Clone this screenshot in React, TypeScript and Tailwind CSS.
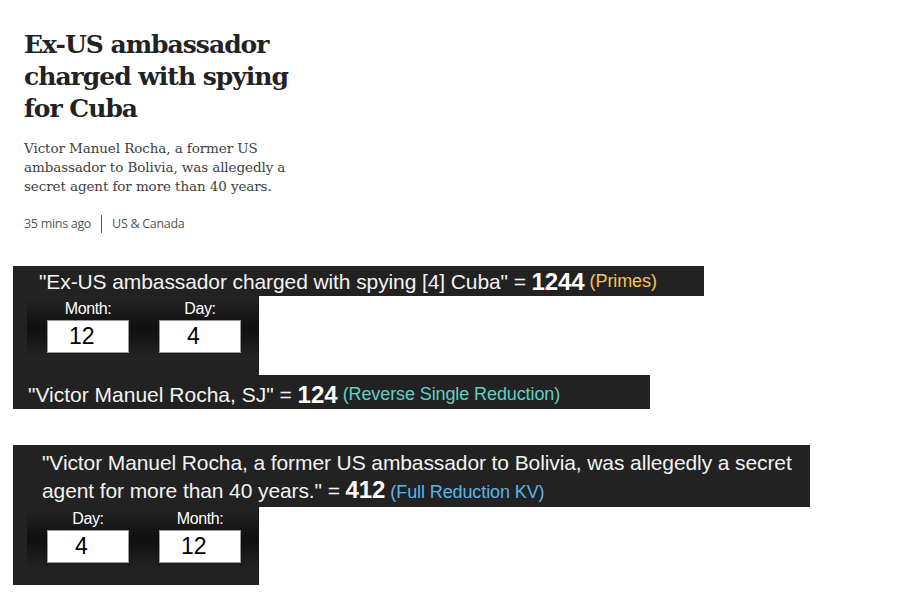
const sans = "font-['Liberation_Sans',Arial,sans-serif]";

type Field = { label: string; value: string; pad: string };

function DateField({ label, value, pad }: Field) {
    return (
        <div className="flex flex-col items-center w-[82px]">
            <span className="text-[16px] leading-[18px] text-white tracking-[-0.4px]">{label}</span>
            <div className={`mt-[2px] w-[82px] h-[33px] bg-white border border-[#9a9a9a] flex items-center text-[23px] text-black ${pad}`}>
                {value}
            </div>
        </div>
    );
}

function DatePanel({ fields, top }: { fields: Field[]; top: string }) {
    return (
        <div className={`ml-[14px] w-[232px] h-[64px] bg-[linear-gradient(to_bottom,#242424_0%,#0f0f0f_50%,#242424_100%)] flex gap-[30px] pl-[20px] ${top}`}>
            {fields.map((f) => (
                <DateField key={f.label} {...f} />
            ))}
        </div>
    );
}

export default function App() {
    return (
        <div className="w-[920px] h-[604px] bg-white overflow-hidden">
            <article className="pl-[24px] pt-[29px] w-[320px]">
                <h1 className="font-['DejaVu_Serif',serif] font-bold text-[25px] leading-[32px] text-[#202224] tracking-[-1px]">
                    Ex-US ambassador
                    <br />
                    charged with spying
                    <br />
                    for Cuba
                </h1>
                <p className="mt-[14px] font-['DejaVu_Serif',serif] text-[13.5px] leading-[19px] text-[#3f3f42] w-[280px] tracking-[-0.1px]">
                    Victor Manuel Rocha, a former US
                    <br />
                    ambassador to Bolivia, was allegedly a
                    <br />
                    secret agent for more than 40 years.
                </p>
                <div className="mt-[19px] flex items-center font-['Open_Sans',sans-serif] text-[12.5px] text-[#545658] tracking-[-0.3px]">
                    <span>35 mins ago</span>
                    <span className="mx-[10px] w-px h-[18px] bg-[#545658]" />
                    <span>US &amp; Canada</span>
                </div>
            </article>

            <section className={`mt-[32px] ml-[13px] ${sans}`}>
                <div className="w-[691px] h-[30px] bg-[#222222] pl-[26px] pt-[2px] flex items-center text-[21px] text-[#f2f2f2] whitespace-nowrap tracking-[-0.1px]">
                    "Ex-US ambassador charged with spying [4] Cuba" =&nbsp;
                    <b className="text-[24px] text-white">1244</b>
                    <span className="ml-[5px] text-[18px] text-[#f6c25a]">(Primes)</span>
                </div>
                <div className="w-[246px] h-[79px] bg-[#222222]">
                    <DatePanel
                        top="pt-[4px]"
                        fields={[
                            { label: "Month:", value: "12", pad: "pl-[21px]" },
                            { label: "Day:", value: "4", pad: "pl-[27px]" },
                        ]}
                    />
                </div>
                <div className="w-[637px] h-[34px] bg-[#222222] pl-[15px] pt-[6px] flex items-center text-[21px] text-[#f2f2f2] whitespace-nowrap">
                    "Victor Manuel Rocha, SJ" =&nbsp;
                    <b className="text-[24px] text-white">124</b>
                    <span className="ml-[5px] text-[18px] text-[#5fd0c4] tracking-[-0.1px]">(Reverse Single Reduction)</span>
                </div>
            </section>

            <section className={`mt-[36px] ml-[13px] ${sans}`}>
                <div className="w-[797px] h-[62px] bg-[#222222] pl-[29px] pt-[4px] text-[21px] leading-[27px] text-[#f2f2f2] tracking-[-0.1px]">
                    "Victor Manuel Rocha, a former US ambassador to Bolivia, was allegedly a secret
                    <br />
                    agent for more than 40 years." =&nbsp;
                    <b className="text-[24px] text-white">412</b>
                    <span className="ml-[5px] text-[18px] text-[#5ab4ea]">(Full Reduction KV)</span>
                </div>
                <div className="w-[246px] h-[78px] bg-[#222222]">
                    <DatePanel
                        top="pt-[3px]"
                        fields={[
                            { label: "Day:", value: "4", pad: "pl-[27px]" },
                            { label: "Month:", value: "12", pad: "pl-[21px]" },
                        ]}
                    />
                </div>
            </section>
        </div>
    );
}
